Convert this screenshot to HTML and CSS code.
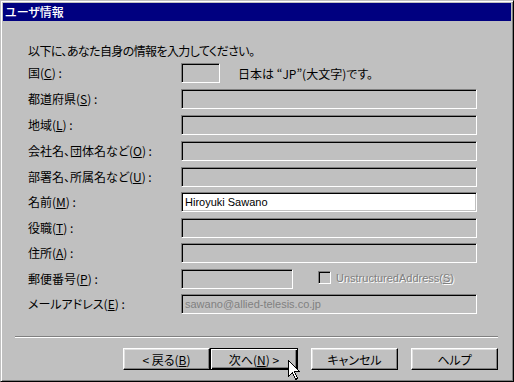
FILE: index.html
```html
<!DOCTYPE html>
<html lang="ja">
<head>
<meta charset="utf-8">
<title>ユーザ情報</title>
<link rel="stylesheet" href="styles.css">
</head>
<body>
<div class="window">
  <div class="titlebar"><span class="title">ユーザ情報</span></div>
  <div class="body">
    <p class="intro">以下に、あなた自身の情報を入力してください。</p>
    <div class="form">
      <div class="lbl">国(<u>C</u>) :</div>
      <div class="fld"><span class="field f-country"></span><span class="hint">日本は “JP”(大文字)です。</span></div>

      <div class="lbl">都道府県(<u>S</u>) :</div>
      <div class="fld"><span class="field"></span></div>

      <div class="lbl">地域(<u>L</u>) :</div>
      <div class="fld"><span class="field"></span></div>

      <div class="lbl">会社名、団体名など(<u>O</u>) :</div>
      <div class="fld"><span class="field"></span></div>

      <div class="lbl">部署名、所属名など(<u>U</u>) :</div>
      <div class="fld"><span class="field"></span></div>

      <div class="lbl">名前(<u>M</u>) :</div>
      <div class="fld"><span class="field f-white">Hiroyuki Sawano</span></div>

      <div class="lbl">役職(<u>T</u>) :</div>
      <div class="fld"><span class="field"></span></div>

      <div class="lbl">住所(<u>A</u>) :</div>
      <div class="fld"><span class="field"></span></div>

      <div class="lbl">郵便番号(<u>P</u>) :</div>
      <div class="fld"><span class="field f-postal"></span><span class="check"></span><span class="check-label">UnstructuredAddress(<u>S</u>)</span></div>

      <div class="lbl">メールアドレス(<u>E</u>) :</div>
      <div class="fld"><span class="field f-disabled">sawano@allied-telesis.co.jp</span></div>
    </div>
    <div class="sep"></div>
    <div class="buttons">
      <div class="btn">&lt; 戻る(<u>B</u>)</div>
      <div class="btn btn-default">次へ(<u>N</u>) &gt;</div>
      <div class="btn btn-gap">キャンセル</div>
      <div class="btn btn-gap">ヘルプ</div>
    </div>
  </div>
  <svg class="cursor" width="13" height="20" viewBox="0 0 13 20">
    <path d="M0.5 0.5 V16.5 L4.5 12.5 L7.5 19.5 L9.5 18.5 L6.5 11.5 H11.5 Z" fill="#fff" stroke="#000" stroke-width="1" stroke-linejoin="miter"/>
  </svg>
</div>
</body>
</html>
```

FILE: styles.css
```css
html, body {
  margin: 0;
  padding: 0;
  background: #c0c0c0;
}

body {
  font-family: "Noto Sans CJK JP", "Liberation Sans", sans-serif;
  font-size: 12px;
  color: #000;
  font-feature-settings: "palt";
}

.window {
  box-sizing: border-box;
  position: relative;
  width: 514px;
  height: 382px;
  padding: 2px;
  border: 1px solid;
  border-color: #c0c0c0 #000 #000 #c0c0c0;
  box-shadow: inset 1px 1px #fff, inset -1px -1px #808080;
  background: #c0c0c0;
  overflow: hidden;
}

.titlebar {
  height: 18px;
  background: #000080;
  color: #fff;
  font-weight: 500;
  line-height: 18px;
  padding-left: 2px;
  display: flex;
  align-items: center;
}

.intro {
  margin: 22px 0 0 25px;
  line-height: 16px;
  height: 16px;
  letter-spacing: -0.6px;
}

.form {
  display: grid;
  grid-template-columns: 153px 1fr;
  grid-template-rows: 26px 26px 26px 26px 25px 26px 25px 26px 25px 20px;
  margin: 4px 0 0 25px;
}

.lbl {
  height: 20px;
  line-height: 20px;
  white-space: nowrap;
}

.fld {
  height: 20px;
  display: flex;
  align-items: center;
}

.field {
  box-sizing: border-box;
  display: block;
  width: 296px;
  height: 20px;
  padding-left: 3px;
  border: 1px solid;
  border-color: #808080 #fff #fff #808080;
  box-shadow: inset 1px 1px #000, inset -1px -1px #c0c0c0;
  background: #c0c0c0;
  font-family: "Liberation Sans", sans-serif;
  font-size: 11px;
  line-height: 18px;
  white-space: nowrap;
}

.f-country { width: 39px; }
.f-postal { width: 112px; }
.f-white { background: #fff; }
.f-disabled { color: #808080; }

.hint {
  margin-left: 18px;
  white-space: nowrap;
}

.check {
  box-sizing: border-box;
  display: block;
  width: 13px;
  height: 13px;
  margin-left: 25px;
  margin-top: -3px;
  border: 1px solid;
  border-color: #808080 #fff #fff #808080;
  box-shadow: inset 1px 1px #000, inset -1px -1px #c0c0c0;
  background: #c0c0c0;
}

.check-label {
  margin-left: 5px;
  margin-top: -3px;
  font-family: "Liberation Sans", sans-serif;
  font-size: 11px;
  color: #808080;
  text-shadow: 1px 1px 0 #fff;
  white-space: nowrap;
}

.sep {
  margin: 22px 13px 0 12px;
  border-top: 1px solid #808080;
  border-bottom: 1px solid #fff;
}

.buttons {
  display: flex;
  margin-top: 10px;
  padding-left: 120px;
}

.btn {
  box-sizing: border-box;
  width: 87px;
  height: 22px;
  display: flex;
  align-items: center;
  justify-content: center;
  border: 1px solid;
  border-color: #fff #000 #000 #fff;
  box-shadow: inset -1px -1px #808080, inset 1px 1px #dfdfdf;
  background: #c0c0c0;
  white-space: nowrap;
}

.btn-default {
  width: 88px;
  border-color: #000;
  box-shadow: inset 1px 1px #fff, inset -1px -1px #000, inset -2px -2px #808080;
}

.btn-gap { margin-left: 13px; }

.cursor {
  position: absolute;
  left: 287px;
  top: 359px;
  shape-rendering: crispEdges;
}
```
